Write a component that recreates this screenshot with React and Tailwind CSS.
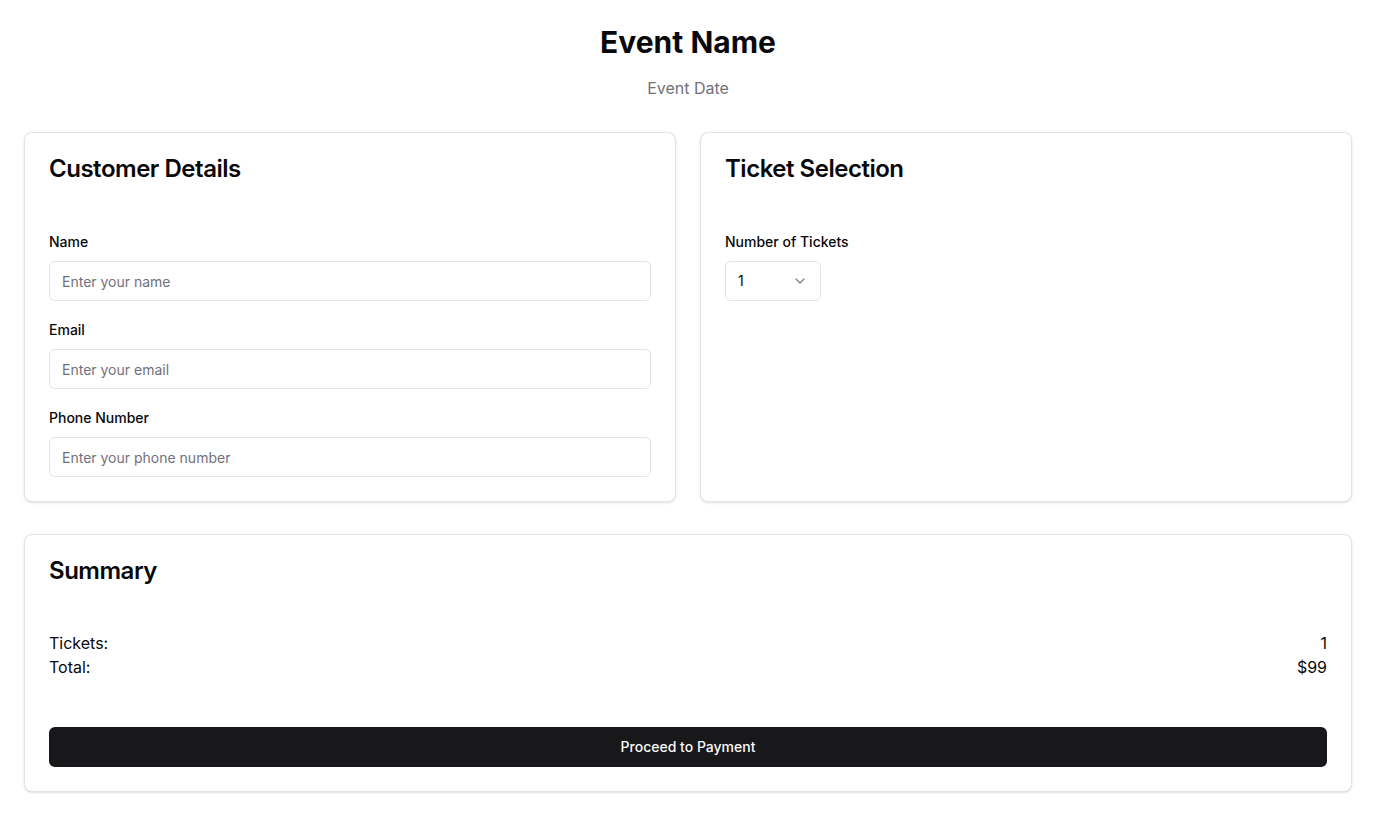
import { ChevronDown } from 'lucide-react';

const Card = ({ className = '', children }) => (
  <div className={`rounded-lg border border-[#e4e4e7] bg-white shadow-sm ${className}`}>{children}</div>
);

const CardTitle = ({ children, pb = 'pb-[50px]' }) => (
  <div className={`p-6 ${pb}`}>
    <h3 className="text-2xl font-semibold leading-none tracking-[-0.02em] text-[#09090b]">{children}</h3>
  </div>
);

const Field = ({ label, placeholder, type = 'text' }) => (
  <div>
    <label className="block pt-px text-sm font-medium leading-5 text-[#09090b]">{label}</label>
    <input
      type={type}
      placeholder={placeholder}
      className="mt-[9px] h-10 w-full rounded-md border border-[#e4e4e7] bg-white px-3 text-sm text-[#09090b] placeholder:text-[#71717a] outline-none"
    />
  </div>
);

const App = () => {
  return (
    <div className="min-h-screen bg-white px-6 py-6 font-['Inter',sans-serif] text-[#09090b]">
      <div className="text-center">
        <h1 className="text-3xl font-bold leading-9">Event Name</h1>
        <p className="mt-4 text-base text-[#71717a]">Event Date</p>
      </div>

      <div className="mt-8 grid grid-cols-2 gap-6">
        <Card>
          <CardTitle>Customer Details</CardTitle>
          <div className="flex flex-col gap-[18px] px-6 pb-6">
            <Field label="Name" placeholder="Enter your name" />
            <Field label="Email" placeholder="Enter your email" type="email" />
            <Field label="Phone Number" placeholder="Enter your phone number" type="tel" />
          </div>
        </Card>

        <Card>
          <CardTitle>Ticket Selection</CardTitle>
          <div className="px-6 pb-6">
            <label className="block pt-px text-sm font-medium leading-5">Number of Tickets</label>
            <button className="mt-[9px] flex h-10 w-24 items-center justify-between rounded-md border border-[#e4e4e7] bg-white px-3 text-sm">
              <span>1</span>
              <ChevronDown className="h-4 w-4 opacity-50" />
            </button>
          </div>
        </Card>
      </div>

      <Card className="mt-8">
        <CardTitle pb="pb-12">Summary</CardTitle>
        <div className="px-6 pb-6">
          <div className="text-base leading-6">
            <div className="flex justify-between">
              <span>Tickets:</span>
              <span>1</span>
            </div>
            <div className="flex justify-between">
              <span>Total:</span>
              <span>$99</span>
            </div>
          </div>
          <button className="mt-12 h-10 w-full rounded-md bg-[#18181b] text-sm font-medium text-[#fafafa]">
            Proceed to Payment
          </button>
        </div>
      </Card>
    </div>
  );
};

export default App;
